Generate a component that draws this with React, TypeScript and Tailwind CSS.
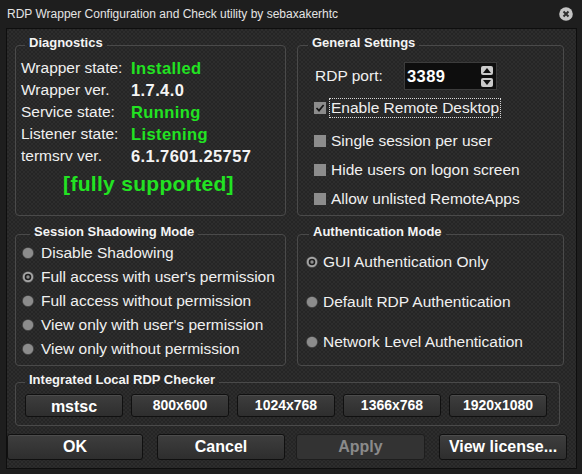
import React from 'react'

const diagnostics = [
  { label: 'Wrapper state:', value: 'Installed', ok: true },
  { label: 'Wrapper ver.', value: '1.7.4.0' },
  { label: 'Service state:', value: 'Running', ok: true },
  { label: 'Listener state:', value: 'Listening', ok: true },
  { label: 'termsrv ver.', value: '6.1.7601.25757' },
]

const shadowModes = [
  'Disable Shadowing',
  "Full access with user's permission",
  'Full access without permission',
  "View only with user's permission",
  'View only without permission',
]

const authModes = ['GUI Authentication Only', 'Default RDP Authentication', 'Network Level Authentication']

const checkerModes = ['800x600', '1024x768', '1366x768', '1920x1080']

function Frame({
  title,
  legend,
  className,
  children,
}: {
  title: string
  legend: string
  className: string
  children: React.ReactNode
}) {
  return (
    <fieldset className={`min-w-0 rounded-[4px] border border-[#4a4a4a] ${className}`}>
      <legend className={`${legend} px-[4px] pb-[4px] text-[13px] leading-[16px] font-bold text-[#f4f4f4]`}>
        {title}
      </legend>
      {children}
    </fieldset>
  )
}

function Radio({ checked }: { checked?: boolean }) {
  return (
    <svg width="12" height="12" viewBox="0 0 12 12" className="shrink-0">
      <circle cx="6" cy="6" r="5.6" fill={checked ? '#a6a6a6' : '#8c8c8c'} stroke="#3a3a3a" strokeWidth="0.6" />
      {checked && (
        <>
          <circle cx="6" cy="6" r="3.3" fill="#1e1e1e" />
          <circle cx="6" cy="6" r="1.7" fill="#8e8e8e" />
        </>
      )}
    </svg>
  )
}

function CheckBox({ checked, label, focused }: { checked?: boolean; label: string; focused?: boolean }) {
  return (
    <div className="flex h-[20px] items-center pl-[15px]">
      <span className="flex h-[14px] w-[14px] shrink-0 items-center justify-center border border-[#2a2a2a] bg-[#8c8c8c]">
        {checked && (
          <svg width="10" height="10" viewBox="0 0 10 10">
            <path d="M1.5 5 L4 7.6 L8.6 2" fill="none" stroke="#161616" strokeWidth="1.7" />
          </svg>
        )}
      </span>
      <span
        className={`ml-[2px] border px-[1px] leading-[18px] ${
          focused ? 'border-dotted border-[#d8d8d8]' : 'border-transparent'
        }`}
      >
        {label}
      </span>
    </div>
  )
}

function Button({ label, className }: { label: string; className: string }) {
  return (
    <button
      className={`rounded-[3px] border border-[#101010] bg-linear-to-b from-[#3e3e3e] to-[#2e2e2e] font-bold text-white shadow-[inset_0_1px_0_#4c4c4c] ${className}`}
    >
      {label}
    </button>
  )
}

export default function App() {
  return (
    <div className="flex h-[474px] w-[582px] flex-col bg-[#1e1e1e] font-['Liberation_Sans',Arial,sans-serif] text-[15.5px] text-[#f0f0f0]">
      {/* title bar */}
      <div className="flex h-[28px] items-center justify-between pr-[9px] pl-[7px]">
        <span className="text-[12px] text-[#e4e4e4]">RDP Wrapper Configuration and Check utility by sebaxakerhtc</span>
        <svg width="14" height="14" viewBox="0 0 14 14">
          <circle cx="7" cy="7" r="6.8" fill="#c4c4c4" />
          <path d="M4.5 4.5 L9.5 9.5 M9.5 4.5 L4.5 9.5" stroke="#2e2e2e" strokeWidth="2" />
        </svg>
      </div>

      <div className="mr-[5px] ml-[6px] flex h-[441px] flex-col border border-[#0e0e0e] bg-[repeating-conic-gradient(#2d2d2d_0%_25%,#252525_0%_50%)] bg-[length:4px_4px] pt-[6px]">
        <div className="grid grid-cols-[271px_267px] gap-x-[11px] gap-y-[8px] pl-[8px]">
          <Frame title="Diagnostics" legend="ml-[9px]" className="h-[181px]">
            <div className="mt-[2px] grid grid-cols-[110px_1fr] pl-[5px]">
              {diagnostics.map((d) => (
                <React.Fragment key={d.label}>
                  <div className="flex h-[22px] items-center">{d.label}</div>
                  <div
                    className={`flex h-[22px] items-center text-[16.5px] font-bold tracking-[0.4px] ${
                      d.ok ? 'text-[#22e322]' : 'text-[#f4f4f4]'
                    }`}
                  >
                    {d.value}
                  </div>
                </React.Fragment>
              ))}
            </div>
            <div className="flex h-[34px] items-center justify-center pr-[4px] text-[21px] font-bold tracking-[0.3px] text-[#22e322]">
              [fully supported]
            </div>
          </Frame>

          <Frame title="General Settings" legend="ml-[10px]" className="h-[181px]">
            <div className="mt-[7px] flex items-center pl-[17px]">
              <span className="w-[89px]">RDP port:</span>
              <div className="flex h-[28px] w-[93px] items-center justify-between border border-[#3c3c3c] bg-[#0e0e0e] pr-[3px] pl-[2px]">
                <span className="text-[16.5px] font-bold tracking-[0.4px] text-white">3389</span>
                <div className="flex flex-col gap-[3px]">
                  <span className="flex h-[9px] w-[12px] items-center justify-center rounded-[2px] bg-[#cacaca]">
                    <svg width="8" height="5" viewBox="0 0 8 5">
                      <path d="M0 5 L4 0 L8 5 Z" fill="#111" />
                    </svg>
                  </span>
                  <span className="flex h-[9px] w-[12px] items-center justify-center rounded-[2px] bg-[#cacaca]">
                    <svg width="8" height="5" viewBox="0 0 8 5">
                      <path d="M0 0 L4 5 L8 0 Z" fill="#111" />
                    </svg>
                  </span>
                </div>
              </div>
            </div>
            <div className="mt-[8px]">
              <CheckBox checked focused label="Enable Remote Desktop" />
            </div>
            <div className="mt-[13px]">
              <CheckBox label="Single session per user" />
            </div>
            <div className="mt-[9px]">
              <CheckBox label="Hide users on logon screen" />
            </div>
            <div className="mt-[9px]">
              <CheckBox label="Allow unlisted RemoteApps" />
            </div>
          </Frame>

          <Frame title="Session Shadowing Mode" legend="ml-[14px]" className="h-[142px]">
            <div className="mt-[-3px] pl-[6px]">
              {shadowModes.map((m, i) => (
                <div key={m} className="flex h-[24px] items-center gap-[7px]">
                  <Radio checked={i === 1} />
                  <span>{m}</span>
                </div>
              ))}
            </div>
          </Frame>

          <Frame title="Authentication Mode" legend="ml-[11px]" className="h-[142px]">
            <div className="mt-[-2px] pl-[8px]">
              {authModes.map((m, i) => (
                <div key={m} className="flex h-[40px] items-center gap-[5px]">
                  <Radio checked={i === 0} />
                  <span>{m}</span>
                </div>
              ))}
            </div>
          </Frame>
        </div>

        <div className="mt-[6px] pl-[8px]">
          <Frame title="Integrated Local RDP Checker" legend="ml-[9px]" className="h-[54px] w-[545px]">
            <div className="mt-[2px] flex gap-[8px] pl-[9px]">
              <Button label="mstsc" className="h-[23px] w-[98px] text-[16px]" />
              {checkerModes.map((m) => (
                <Button key={m} label={m} className="h-[23px] w-[98px] text-[14px]" />
              ))}
            </div>
          </Frame>
        </div>

        <div className="mt-[8px] flex">
          <Button label="OK" className="h-[26px] w-[136px] text-[16px]" />
          <Button label="Cancel" className="ml-[14px] h-[26px] w-[128px] text-[16px]" />
          <button className="ml-[11px] h-[26px] w-[129px] rounded-[3px] border border-[#1e1e1e] bg-[#333333] text-[16px] font-bold text-[#8a8a8a]">
            Apply
          </button>
          <Button label="View license..." className="ml-[14px] h-[26px] w-[128px] text-[16px]" />
        </div>
      </div>
    </div>
  )
}
